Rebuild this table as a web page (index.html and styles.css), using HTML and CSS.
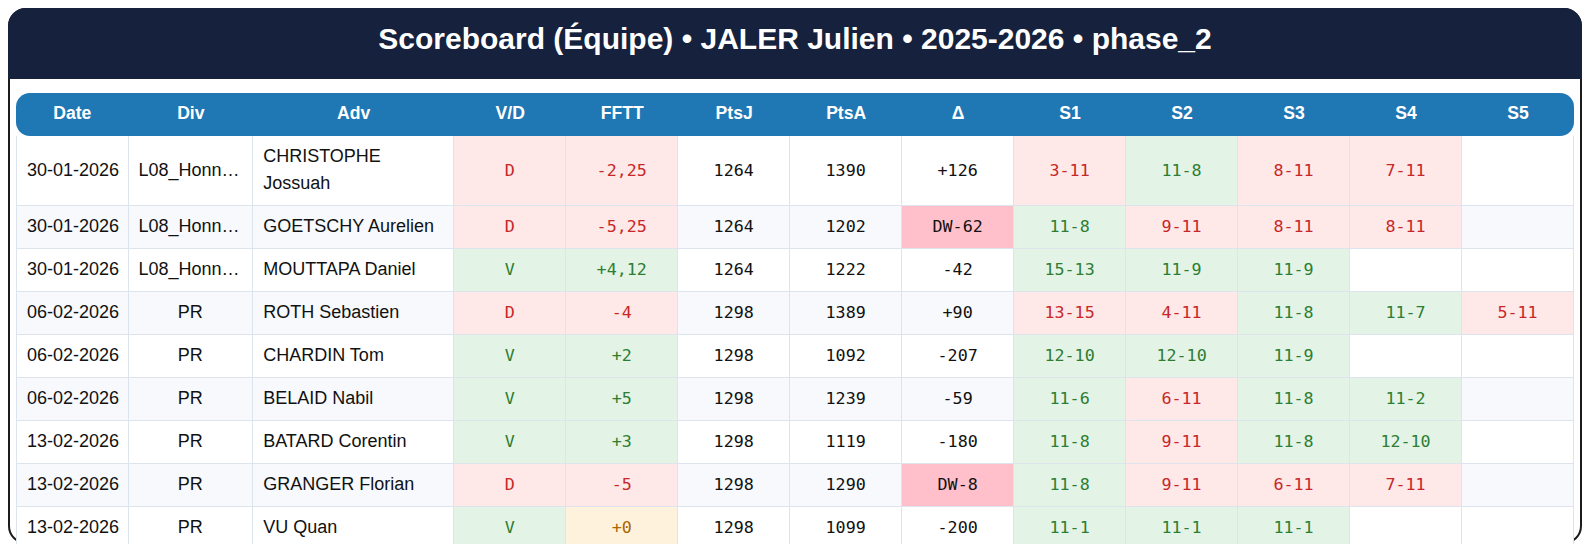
FILE: index.html
```html
<!DOCTYPE html>
<html lang="fr">
<head>
<meta charset="utf-8">
<title>Scoreboard</title>
<link rel="stylesheet" href="styles.css">
</head>
<body>
<div class="board">
  <div class="title">Scoreboard (Équipe) • JALER Julien • 2025-2026 • phase_2</div>
  <table class="scores">
    <colgroup>
      <col class="c-date"><col class="c-div"><col class="c-adv">
      <col><col><col><col><col><col><col><col><col><col>
    </colgroup>
    <thead>
      <tr><th>Date</th><th>Div</th><th>Adv</th><th>V/D</th><th>FFTT</th><th>PtsJ</th><th>PtsA</th><th>Δ</th><th>S1</th><th>S2</th><th>S3</th><th>S4</th><th>S5</th></tr>
    </thead>
    <tbody>
      <tr>
        <td>30-01-2026</td><td class="div">L08_Honneur</td><td class="adv">CHRISTOPHE Jossuah</td>
        <td class="m l">D</td><td class="m l">-2,25</td><td class="m">1264</td><td class="m">1390</td><td class="m">+126</td>
        <td class="m l">3-11</td><td class="m w">11-8</td><td class="m l">8-11</td><td class="m l">7-11</td><td class="m"></td>
      </tr>
      <tr class="alt">
        <td>30-01-2026</td><td class="div">L08_Honneur</td><td class="adv">GOETSCHY Aurelien</td>
        <td class="m l">D</td><td class="m l">-5,25</td><td class="m">1264</td><td class="m">1202</td><td class="m dw">DW-62</td>
        <td class="m w">11-8</td><td class="m l">9-11</td><td class="m l">8-11</td><td class="m l">8-11</td><td class="m"></td>
      </tr>
      <tr>
        <td>30-01-2026</td><td class="div">L08_Honneur</td><td class="adv">MOUTTAPA Daniel</td>
        <td class="m w">V</td><td class="m w">+4,12</td><td class="m">1264</td><td class="m">1222</td><td class="m">-42</td>
        <td class="m w">15-13</td><td class="m w">11-9</td><td class="m w">11-9</td><td class="m"></td><td class="m"></td>
      </tr>
      <tr class="alt">
        <td>06-02-2026</td><td class="div">PR</td><td class="adv">ROTH Sebastien</td>
        <td class="m l">D</td><td class="m l">-4</td><td class="m">1298</td><td class="m">1389</td><td class="m">+90</td>
        <td class="m l">13-15</td><td class="m l">4-11</td><td class="m w">11-8</td><td class="m w">11-7</td><td class="m l">5-11</td>
      </tr>
      <tr>
        <td>06-02-2026</td><td class="div">PR</td><td class="adv">CHARDIN Tom</td>
        <td class="m w">V</td><td class="m w">+2</td><td class="m">1298</td><td class="m">1092</td><td class="m">-207</td>
        <td class="m w">12-10</td><td class="m w">12-10</td><td class="m w">11-9</td><td class="m"></td><td class="m"></td>
      </tr>
      <tr class="alt">
        <td>06-02-2026</td><td class="div">PR</td><td class="adv">BELAID Nabil</td>
        <td class="m w">V</td><td class="m w">+5</td><td class="m">1298</td><td class="m">1239</td><td class="m">-59</td>
        <td class="m w">11-6</td><td class="m l">6-11</td><td class="m w">11-8</td><td class="m w">11-2</td><td class="m"></td>
      </tr>
      <tr>
        <td>13-02-2026</td><td class="div">PR</td><td class="adv">BATARD Corentin</td>
        <td class="m w">V</td><td class="m w">+3</td><td class="m">1298</td><td class="m">1119</td><td class="m">-180</td>
        <td class="m w">11-8</td><td class="m l">9-11</td><td class="m w">11-8</td><td class="m w">12-10</td><td class="m"></td>
      </tr>
      <tr class="alt">
        <td>13-02-2026</td><td class="div">PR</td><td class="adv">GRANGER Florian</td>
        <td class="m l">D</td><td class="m l">-5</td><td class="m">1298</td><td class="m">1290</td><td class="m dw">DW-8</td>
        <td class="m w">11-8</td><td class="m l">9-11</td><td class="m l">6-11</td><td class="m l">7-11</td><td class="m"></td>
      </tr>
      <tr>
        <td>13-02-2026</td><td class="div">PR</td><td class="adv">VU Quan</td>
        <td class="m w">V</td><td class="m z">+0</td><td class="m">1298</td><td class="m">1099</td><td class="m">-200</td>
        <td class="m w">11-1</td><td class="m w">11-1</td><td class="m w">11-1</td><td class="m"></td><td class="m"></td>
      </tr>
    </tbody>
  </table>
</div>
</body>
</html>
```

FILE: styles.css
```css
body {
  margin: 8px;
  background: #ffffff;
  font-family: "Liberation Sans", Arial, sans-serif;
  color: #111111;
}

.board {
  box-sizing: border-box;
  height: 536px;
  border: 2px solid #1c1c1c;
  border-radius: 18px;
  background: #ffffff;
}

.title {
  margin: -2px -2px 0;
  padding: 14px 20px 24px;
  background: #15213d;
  color: #ffffff;
  border-radius: 18px 18px 0 0;
  text-align: center;
  font-size: 30px;
  font-weight: bold;
  line-height: 33px;
}

.scores {
  margin: 13.5px 6px 0;
  width: 1558px;
  table-layout: fixed;
  border-collapse: separate;
  border-spacing: 0;
  font-size: 18px;
}

.c-date { width: 112.5px; }
.c-div { width: 124.7px; }
.c-adv { width: 201.1px; }

.scores th {
  background: #1f77b4;
  color: #ffffff;
  font-weight: bold;
  font-size: 17.6px;
  line-height: 27.4px;
  padding: 7.9px 10px;
  text-align: center;
}

.scores th:first-child { border-radius: 14px 0 0 14px; }
.scores th:last-child { border-radius: 0 14px 14px 0; }

.scores td {
  padding: 7.25px 10px;
  line-height: 27.5px;
  text-align: center;
  vertical-align: middle;
  white-space: nowrap;
  background: #ffffff;
  border-right: 1px solid #dde4ee;
  border-bottom: 1px solid #dde4ee;
  color: #111111;
}

.scores td:first-child { border-left: 1px solid #dde4ee; }

.scores tr.alt td { background: #f7f9fc; }

.scores td.div {
  overflow: hidden;
  text-overflow: ellipsis;
}

.scores td.adv {
  text-align: left;
  white-space: normal;
}

.scores td.m {
  font-family: "DejaVu Sans Mono", monospace;
  font-size: 16.7px;
}

.scores tr td.l { background: #ffe8e8; color: #c62828; }
.scores tr td.w { background: #e3f4e7; color: #2e7d32; }
.scores tr td.z { background: #fff2dc; color: #a86800; }
.scores tr td.dw { background: #ffc0cb; color: #111111; }
```
